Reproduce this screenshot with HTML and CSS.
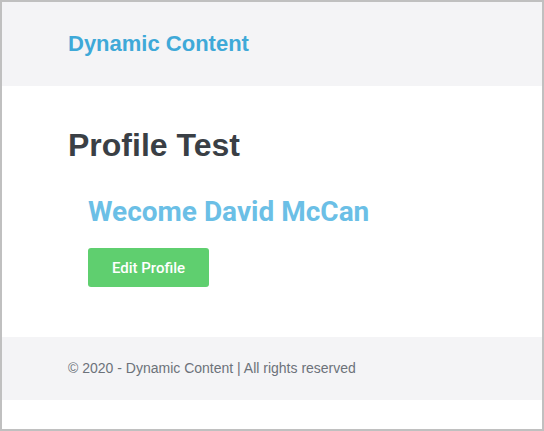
FILE: index.html
```html
<!DOCTYPE html>
<html>
<head>
<meta charset="utf-8">
<link rel="stylesheet" href="styles.css">
</head>
<body>
<div class="frame">
  <header class="site-header">
    <div class="brand">Dynamic Content</div>
  </header>
  <main class="main">
    <h1 class="page-title">Profile Test</h1>
    <div class="profile">
      <h2 class="welcome">Wecome David McCan</h2>
      <button class="btn-edit">Edit Profile</button>
    </div>
  </main>
  <footer class="site-footer">
    <p class="copy">© 2020 - Dynamic Content | All rights reserved</p>
  </footer>
</div>
</body>
</html>
```
FILE: styles.css
```css
html, body {
  margin: 0;
  padding: 0;
  background: #fff;
}
.frame {
  box-sizing: border-box;
  width: 544px;
  height: 431px;
  border: 2px solid #c0c0c0;
  display: flex;
  flex-direction: column;
  font-family: "Liberation Sans", Arial, sans-serif;
}
.site-header {
  height: 84px;
  background: #f4f4f6;
  display: flex;
  align-items: center;
  padding-left: 66px;
}
.brand {
  font-size: 22px;
  font-weight: bold;
  color: #3fa9d8;
}
.main {
  padding: 0 0 0 66px;
  height: 251px;
  box-sizing: border-box;
}
.page-title {
  margin: 40px 0 0;
  font-size: 32px;
  line-height: 38px;
  font-weight: bold;
  color: #3a3f45;
}
.profile {
  padding-left: 20px;
}
.welcome {
  margin: 31px 0 0;
  font-family: Roboto, sans-serif;
  font-size: 28px;
  line-height: 34px;
  font-weight: 700;
  color: #6bbfe6;
}
.btn-edit {
  margin-top: 19px;
  width: 121px;
  height: 39px;
  border: none;
  border-radius: 3px;
  background: #5fcf6f;
  color: #fff;
  font-family: Roboto, sans-serif;
  font-size: 15px;
  font-weight: 500;
  padding: 0;
}
.site-footer {
  height: 63px;
  background: #f4f4f6;
  display: flex;
  align-items: center;
  padding-left: 66px;
  padding-bottom: 2px;
  box-sizing: border-box;
}
.copy {
  margin: 0;
  font-size: 14px;
  color: #6c727a;
}
```
